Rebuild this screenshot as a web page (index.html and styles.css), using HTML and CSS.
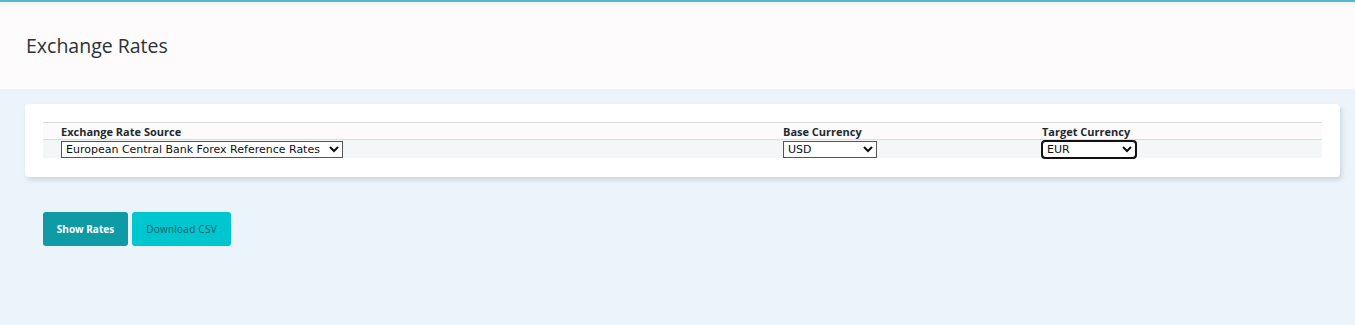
FILE: index.html
```html
<!DOCTYPE html>
<html lang="en">
<head>
  <meta charset="UTF-8">
  <meta name="viewport" content="width=device-width, initial-scale=1.0">
  <title>Exchange Rates</title>
  <link rel="stylesheet" href="styles.css">
</head>
<body>
  <header class="page-header">
    <h1>Exchange Rates</h1>
  </header>

  <main class="content">
    <div class="card">
      <table class="rates-form">
        <thead>
          <tr>
            <th class="col-source">Exchange Rate Source</th>
            <th class="col-base">Base Currency</th>
            <th>Target Currency</th>
          </tr>
        </thead>
        <tbody>
          <tr>
            <td>
              <select class="sel-source">
                <option>European Central Bank Forex Reference Rates</option>
              </select>
            </td>
            <td>
              <select class="sel-currency">
                <option>USD</option>
                <option>EUR</option>
                <option>GBP</option>
              </select>
            </td>
            <td>
              <select class="sel-currency focused">
                <option>EUR</option>
                <option>USD</option>
                <option>GBP</option>
              </select>
            </td>
          </tr>
        </tbody>
      </table>
    </div>

    <div class="actions">
      <button class="btn-show">Show Rates</button>
      <button class="btn-csv">Download CSV</button>
    </div>
  </main>
</body>
</html>
```

FILE: styles.css
```css
body {
  margin: 0;
  background: #ebf3fb;
  font-family: "Open Sans", "Liberation Sans", sans-serif;
  color: #1f2a33;
}
.page-header {
  border-top: 2px solid #52bbc3;
  background: #fdfbfb;
  height: 87px;
  display: flex;
  align-items: center;
  padding-left: 26px;
  box-shadow: inset 0 6px 6px -4px rgba(0,0,0,0.06);
}
.page-header h1 {
  margin: 0;
  font-size: 19.5px;
  font-weight: 400;
  color: #2a3338;
}
.content {
  padding: 15px 15px 0 25px;
}
.card {
  background: white;
  border-radius: 4px;
  padding: 18px 18px 19px 18px;
  box-shadow: 2px 3px 5px rgba(0,0,0,0.12);
}
.rates-form {
  width: 100%;
  border-collapse: collapse;
}
.rates-form th,
.rates-form td {
  text-align: left;
  padding: 0 0 0 18px;
  font-size: 11px;
  line-height: 14px;
}
.rates-form th {
  height: 16px;
  font-weight: 700;
  color: #1e2a30;
  background: #fcfafa;
  border-top: 1px solid #dcdcdc;
  border-bottom: 1px solid #dcdcdc;
  vertical-align: bottom;
}
.rates-form td {
  background: #f3f7f7;
  height: 18px;
}
.col-source {
  width: 704px;
}
.col-base {
  width: 241px;
}
select {
  font-family: "DejaVu Sans", sans-serif;
  font-size: 11px;
  height: 17px;
  padding: 0;
  border: 1px solid #555;
  border-radius: 0;
  background: white;
  color: #111;
  display: block;
}
.sel-source {
  width: 282px;
}
.sel-currency {
  width: 94px;
}
.focused {
  outline: 2px solid #111;
  outline-offset: -1px;
  border-radius: 3px;
}
.actions {
  display: flex;
  gap: 4px;
  margin: 35px 0 0 18px;
}
.actions button {
  height: 34px;
  border: none;
  border-radius: 3px;
  font-family: "Open Sans", sans-serif;
  font-size: 10px;
  cursor: pointer;
}
.btn-show {
  width: 85px;
  background: #0e9ba6;
  color: white;
  font-weight: 700;
}
.btn-csv {
  width: 99px;
  background: #00c6d0;
  color: #155e66;
  letter-spacing: 0.25px;
}
```
